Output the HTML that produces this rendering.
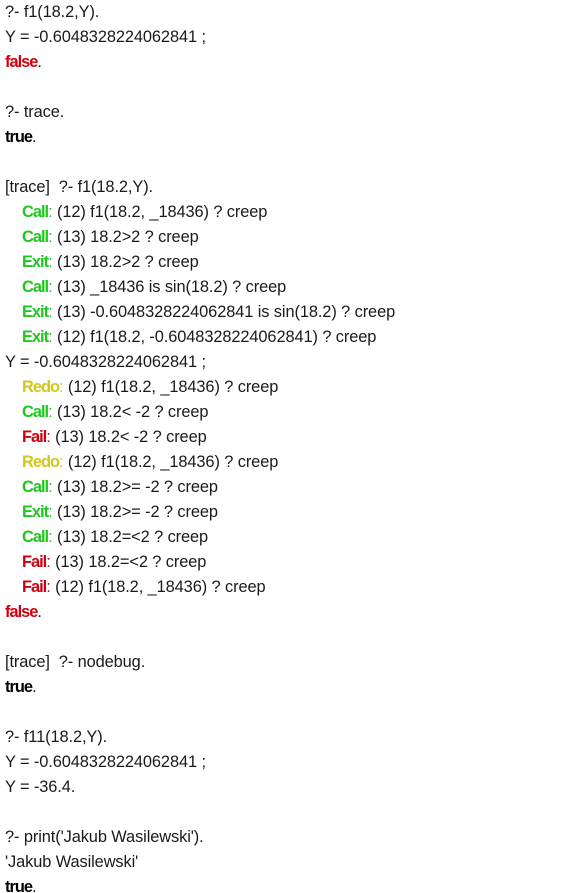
<!DOCTYPE html>
<html><head><style>
html,body{margin:0;padding:0;background:#fff;width:582px;height:893px;overflow:hidden}
body{font-family:"Liberation Sans",Arial,sans-serif;font-size:16.4px;color:#1a1a1a;padding-top:0px}
.l{height:25px;line-height:25px;padding-left:5px;white-space:pre;letter-spacing:-0.1px}
.i{padding-left:22px}
b{font-weight:bold;letter-spacing:-1px}
.r{color:#d00010}.g{color:#1ec81e}.y{color:#d0c81a}.k{color:#000}
</style></head><body>
<div class="l">?- f1(18.2,Y).</div>
<div class="l">Y = -0.6048328224062841 ;</div>
<div class="l"><b class="r">false</b>.</div>
<div class="l"> </div>
<div class="l">?- trace.</div>
<div class="l"><b class="k">true</b>.</div>
<div class="l"> </div>
<div class="l">[trace]  ?- f1(18.2,Y).</div>
<div class="l i"><b class="g">Call</b><span class="g">:</span> (12) f1(18.2, _18436) ? creep</div>
<div class="l i"><b class="g">Call</b><span class="g">:</span> (13) 18.2&gt;2 ? creep</div>
<div class="l i"><b class="g">Exit</b><span class="g">:</span> (13) 18.2&gt;2 ? creep</div>
<div class="l i"><b class="g">Call</b><span class="g">:</span> (13) _18436 is sin(18.2) ? creep</div>
<div class="l i"><b class="g">Exit</b><span class="g">:</span> (13) -0.6048328224062841 is sin(18.2) ? creep</div>
<div class="l i"><b class="g">Exit</b><span class="g">:</span> (12) f1(18.2, -0.6048328224062841) ? creep</div>
<div class="l">Y = -0.6048328224062841 ;</div>
<div class="l i"><b class="y">Redo</b><span class="y">:</span> (12) f1(18.2, _18436) ? creep</div>
<div class="l i"><b class="g">Call</b><span class="g">:</span> (13) 18.2&lt; -2 ? creep</div>
<div class="l i"><b class="r">Fail</b><span class="r">:</span> (13) 18.2&lt; -2 ? creep</div>
<div class="l i"><b class="y">Redo</b><span class="y">:</span> (12) f1(18.2, _18436) ? creep</div>
<div class="l i"><b class="g">Call</b><span class="g">:</span> (13) 18.2&gt;= -2 ? creep</div>
<div class="l i"><b class="g">Exit</b><span class="g">:</span> (13) 18.2&gt;= -2 ? creep</div>
<div class="l i"><b class="g">Call</b><span class="g">:</span> (13) 18.2=&lt;2 ? creep</div>
<div class="l i"><b class="r">Fail</b><span class="r">:</span> (13) 18.2=&lt;2 ? creep</div>
<div class="l i"><b class="r">Fail</b><span class="r">:</span> (12) f1(18.2, _18436) ? creep</div>
<div class="l"><b class="r">false</b>.</div>
<div class="l"> </div>
<div class="l">[trace]  ?- nodebug.</div>
<div class="l"><b class="k">true</b>.</div>
<div class="l"> </div>
<div class="l">?- f11(18.2,Y).</div>
<div class="l">Y = -0.6048328224062841 ;</div>
<div class="l">Y = -36.4.</div>
<div class="l"> </div>
<div class="l">?- print('Jakub Wasilewski').</div>
<div class="l">'Jakub Wasilewski'</div>
<div class="l"><b class="k">true</b>.</div>
</body></html>
